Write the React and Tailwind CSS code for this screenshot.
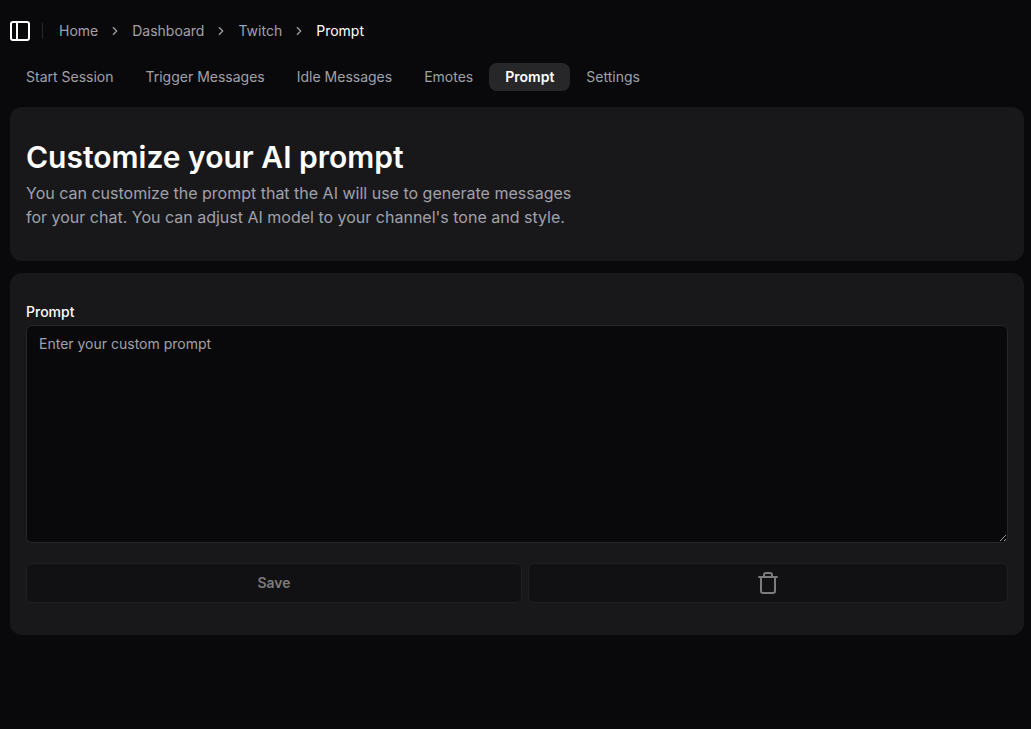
import React from 'react';
import { ChevronRight, PanelLeft, Trash } from 'lucide-react';

const crumbs = ['Home', 'Dashboard', 'Twitch'];
const tabs = ['Start Session', 'Trigger Messages', 'Idle Messages', 'Emotes', 'Prompt', 'Settings'];

const App = () => {
  return (
    <div className="min-h-[729px] bg-[#09090b] text-white font-['Inter',sans-serif] pl-[10px] pr-[7px]">
      {/* Header */}
      <header className="flex items-center h-[62px]">
        <button className="-ml-[2px] flex items-center justify-center w-6 h-6 text-white">
          <PanelLeft size={24} strokeWidth={2} />
        </button>
        <div className="ml-[10px] mr-4 w-px h-4 bg-[#27272a]" />
        <nav className="flex items-center gap-[10px] text-sm">
          {crumbs.map((c) => (
            <React.Fragment key={c}>
              <span className="text-[#a1a1aa]">{c}</span>
              <ChevronRight size={14} className="text-[#a1a1aa]" />
            </React.Fragment>
          ))}
          <span className="text-white">Prompt</span>
        </nav>
      </header>

      {/* Tabs */}
      <div className="flex items-center h-7 mt-px">
        {tabs.map((t) => (
          <div
            key={t}
            className={`h-7 px-4 flex items-center rounded-lg text-sm ${
              t === 'Prompt' ? 'bg-[#27272a] text-white font-semibold' : 'text-[#a1a1aa]'
            }`}
          >
            {t}
          </div>
        ))}
      </div>

      {/* Intro card */}
      <section className="mt-4 h-[154px] rounded-xl bg-[#18181b] px-4 pt-8">
        <h1 className="text-3xl font-semibold leading-9 text-white">Customize your AI prompt</h1>
        <p className="mt-[6px] max-w-[560px] text-base leading-6 text-[#a1a1aa]">
          You can customize the prompt that the AI will use to generate messages for your chat. You can adjust AI model to your channel's tone and style.
        </p>
      </section>

      {/* Prompt form */}
      <section className="mt-3 h-[362px] rounded-xl bg-[#18181b] px-4 pt-[31px]">
        <label className="block text-sm font-medium leading-4 text-white">Prompt</label>
        <textarea
          placeholder="Enter your custom prompt"
          className="mt-[5px] block w-full h-[218px] rounded-md border border-[#27272a] bg-[#09090b] px-3 py-2 text-sm leading-5 text-white outline-none placeholder:text-[#a1a1aa]"
        />
        <div className="mt-5 flex gap-[6px]">
          <button className="w-[496px] h-10 rounded-md border border-[#202023] bg-[#111113] text-sm font-semibold text-[#7b7b7f]">
            Save
          </button>
          <button className="flex-1 h-10 rounded-md border border-[#202023] bg-[#111113] flex items-center justify-center text-[#7b7b7f]">
            <Trash size={24} strokeWidth={2} />
          </button>
        </div>
      </section>
    </div>
  );
};

export default App;
